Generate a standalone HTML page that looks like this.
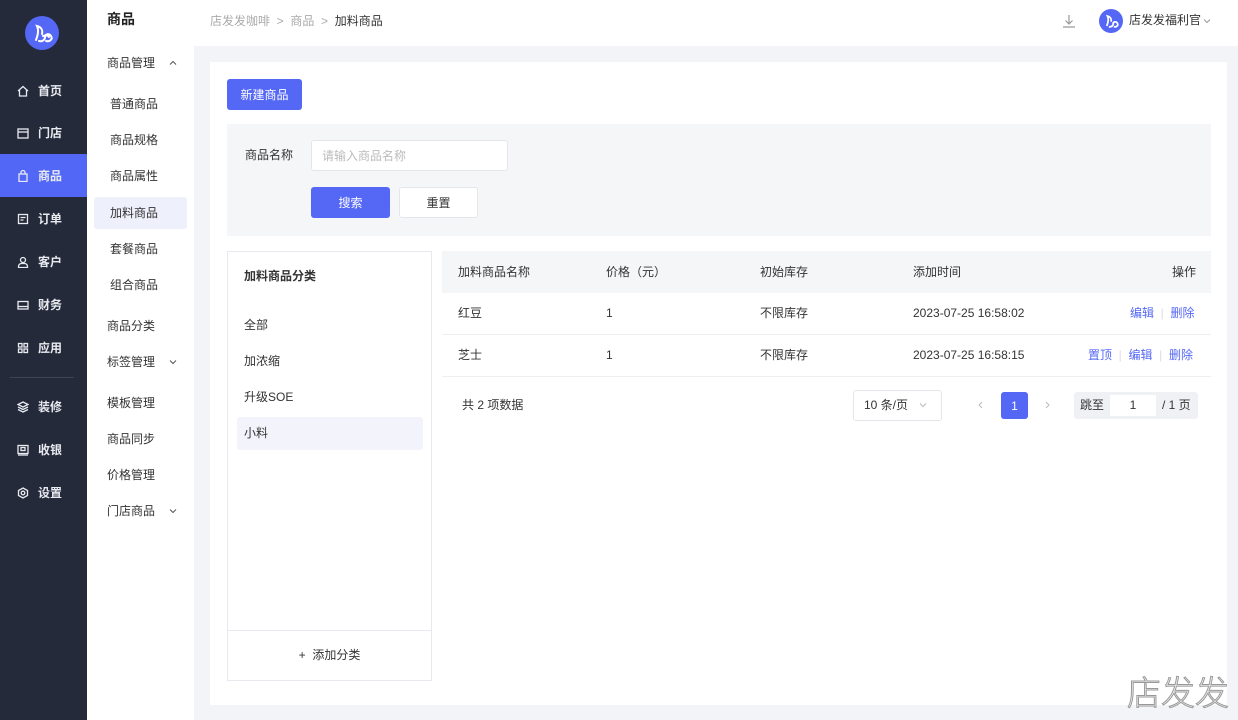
<!DOCTYPE html>
<html><head><meta charset="utf-8">
<style>
*{margin:0;padding:0;box-sizing:border-box}
body{width:1238px;height:720px;overflow:hidden;position:relative;background:#f3f4f8;font-family:"Liberation Sans","Noto Sans CJK SC",sans-serif;font-size:12px;line-height:16px;color:#333}
.abs{position:absolute}
#nav{left:0;top:0;width:87px;height:720px;background:#242a3a}
.logo{left:25px;top:16px;width:34px;height:34px;border-radius:50%;background:#5567f5}
.ni{position:absolute;left:0;width:87px;height:43px;color:#e8eaf0;font-size:12px;font-weight:bold;display:flex;align-items:center;padding-left:17px}
.ni svg{width:12px;height:12px;margin-right:9px;fill:none;stroke:#e8eaf0;stroke-width:1.3}
.ni.on{background:#5267f6}
#sub{left:87px;top:0;width:107px;height:720px;background:#fff}
.si{position:absolute;left:20px;font-size:12px;color:#333}
.si2{position:absolute;left:23px;font-size:12px;color:#333}
.chev{position:absolute;left:81px;width:10px;height:10px}
#top{left:194px;top:0;width:1044px;height:46px;background:#fff}
#card{left:210px;top:62px;width:1017px;height:643px;background:#fff}
.btn{position:absolute;border-radius:3px;display:flex;align-items:center;justify-content:center;font-size:12px}
.pri{background:#5467f5;color:#fff}
.link{color:#5467f5}
</style></head><body>
<div id="nav" class="abs">
  <div class="abs logo"><svg width="34" height="34" viewBox="0 0 34 34"><path d="M11 24c2-5 3-10 1-14 4 1 6 4 5 8M14 25c3 1 6-1 6-4s4-4 6-1-1 6-5 5M18 20c2-1 5-1 6 1" stroke="#fff" stroke-width="2" fill="none" stroke-linecap="round"/></svg></div>
  <div class="ni" style="top:69px"><svg viewBox="0 0 12 12"><path d="M1 6L6 1.5 11 6M2.5 5v6h7V5"/></svg>首页</div>
  <div class="ni" style="top:111px"><svg viewBox="0 0 12 12"><rect x="1" y="2" width="10" height="9"/><path d="M1 5h10"/></svg>门店</div>
  <div class="ni on" style="top:154px"><svg viewBox="0 0 12 12"><rect x="2" y="4" width="8" height="7.5"/><path d="M4 4V2.5a2 2 0 014 0V4"/></svg>商品</div>
  <div class="ni" style="top:197px"><svg viewBox="0 0 12 12"><rect x="1.5" y="1.5" width="9" height="9"/><path d="M3.5 4.5h5M3.5 7h3"/></svg>订单</div>
  <div class="ni" style="top:240px"><svg viewBox="0 0 12 12"><circle cx="6" cy="4" r="2.5"/><path d="M1.5 11.5v-1a3 3 0 013-3h3a3 3 0 013 3v1z"/></svg>客户</div>
  <div class="ni" style="top:283px"><svg viewBox="0 0 12 12"><rect x="1" y="2.5" width="10" height="7.5"/><path d="M1 7.5h10"/></svg>财务</div>
  <div class="ni" style="top:326px"><svg viewBox="0 0 12 12"><rect x="1.5" y="1.5" width="3.5" height="3.5"/><rect x="7" y="1.5" width="3.5" height="3.5"/><rect x="1.5" y="7" width="3.5" height="3.5"/><rect x="7" y="7" width="3.5" height="3.5"/></svg>应用</div>
  <div class="abs" style="left:10px;top:377px;width:64px;height:1px;background:#3e4456"></div>
  <div class="ni" style="top:385px"><svg viewBox="0 0 12 12"><path d="M6 1l5 2.5-5 2.5-5-2.5zM1 6l5 2.5L11 6M1 8.5l5 2.5 5-2.5"/></svg>装修</div>
  <div class="ni" style="top:428px"><svg viewBox="0 0 12 12"><rect x="1" y="1.5" width="10" height="8"/><rect x="4" y="3.5" width="4" height="3"/><path d="M1 11h10"/></svg>收银</div>
  <div class="ni" style="top:471px"><svg viewBox="0 0 12 12"><path d="M6 1l4.5 2.5v5L6 11 1.5 8.5v-5z"/><circle cx="6" cy="6" r="1.8"/></svg>设置</div>
</div>
<div id="sub" class="abs">
  <div class="abs" style="left:20px;top:11px;font-size:14px;font-weight:bold;color:#222">商品</div>
  <div class="si" style="top:55px">商品管理</div><svg class="chev" style="top:58px" viewBox="0 0 10 10"><path d="M2 6.5L5 3.5 8 6.5" stroke="#555" fill="none" stroke-width="1"/></svg>
  <div class="si2" style="top:96px">普通商品</div>
  <div class="si2" style="top:132px">商品规格</div>
  <div class="si2" style="top:168px">商品属性</div>
  <div class="abs" style="left:7px;top:197px;width:93px;height:32px;background:#eef0fb;border-radius:3px"></div>
  <div class="si2" style="top:205px">加料商品</div>
  <div class="si2" style="top:241px">套餐商品</div>
  <div class="si2" style="top:277px">组合商品</div>
  <div class="si" style="top:318px">商品分类</div>
  <div class="si" style="top:354px">标签管理</div><svg class="chev" style="top:357px" viewBox="0 0 10 10"><path d="M2 3.5L5 6.5 8 3.5" stroke="#555" fill="none" stroke-width="1"/></svg>
  <div class="si" style="top:395px">模板管理</div>
  <div class="si" style="top:431px">商品同步</div>
  <div class="si" style="top:467px">价格管理</div>
  <div class="si" style="top:503px">门店商品</div><svg class="chev" style="top:506px" viewBox="0 0 10 10"><path d="M2 3.5L5 6.5 8 3.5" stroke="#555" fill="none" stroke-width="1"/></svg>
</div>
<div id="top" class="abs">
  <div class="abs" style="left:16px;top:13px;color:#aaa">店发发咖啡 &nbsp;&gt;&nbsp; 商品 &nbsp;&gt;&nbsp; <span style="color:#333">加料商品</span></div>
  <svg class="abs" style="left:867px;top:13px" width="16" height="16" viewBox="0 0 16 16" fill="none" stroke="#999" stroke-width="1.2"><path d="M8 2v9M4.5 7.5L8 11l3.5-3.5M2 14h12"/></svg>
  <div class="abs" style="left:905px;top:9px;width:24px;height:24px;border-radius:50%;background:#5567f5"><svg width="24" height="24" viewBox="0 0 34 34"><path d="M11 24c2-5 3-10 1-14 4 1 6 4 5 8M14 25c3 1 6-1 6-4s4-4 6-1-1 6-5 5" stroke="#fff" stroke-width="2.5" fill="none"/></svg></div>
  <div class="abs" style="left:935px;top:12px;color:#333">店发发福利官</div>
  <svg class="abs" style="left:1008px;top:16px" width="10" height="10" viewBox="0 0 10 10"><path d="M2 3.5L5 6.5 8 3.5" stroke="#999" fill="none" stroke-width="1"/></svg>
</div>
<div id="card" class="abs">
  <div class="btn pri" style="left:17px;top:17px;width:75px;height:31px">新建商品</div>
  <div class="abs" style="left:17px;top:62px;width:984px;height:112px;background:#f5f6f8">
    <div class="abs" style="left:18px;top:23px">商品名称</div>
    <div class="abs" style="left:84px;top:16px;width:197px;height:31px;background:#fff;border:1px solid #e4e6eb;border-radius:3px;color:#bbb;padding:7px 10px">请输入商品名称</div>
    <div class="btn pri" style="left:84px;top:63px;width:79px;height:31px">搜索</div>
    <div class="btn" style="left:172px;top:63px;width:79px;height:31px;background:#fff;border:1px solid #e4e6eb">重置</div>
  </div>
  <div class="abs" style="left:17px;top:189px;width:205px;height:430px;border:1px solid #e8e9ee">
    <div class="abs" style="left:16px;top:16px;font-weight:bold">加料商品分类</div>
    <div class="abs" style="left:16px;top:65px">全部</div>
    <div class="abs" style="left:16px;top:101px">加浓缩</div>
    <div class="abs" style="left:16px;top:137px">升级SOE</div>
    <div class="abs" style="left:9px;top:165px;width:186px;height:33px;background:#f3f4fb;border-radius:3px"></div>
    <div class="abs" style="left:16px;top:173px">小料</div>
    <div class="abs" style="left:0;top:378px;width:203px;height:1px;background:#e8e9ee"></div>
    <div class="abs" style="left:0;top:395px;width:203px;text-align:center">+ &nbsp;添加分类</div>
  </div>
  <div class="abs" style="left:232px;top:189px;width:769px;height:42px;background:#f5f6f8"></div>
  <div class="abs" style="left:248px;top:202px">加料商品名称</div>
  <div class="abs" style="left:396px;top:202px">价格（元）</div>
  <div class="abs" style="left:550px;top:202px">初始库存</div>
  <div class="abs" style="left:703px;top:202px">添加时间</div>
  <div class="abs" style="left:962px;top:202px">操作</div>
  <div class="abs" style="left:248px;top:243px">红豆</div>
  <div class="abs" style="left:396px;top:243px">1</div>
  <div class="abs" style="left:550px;top:243px">不限库存</div>
  <div class="abs" style="left:703px;top:243px">2023-07-25 16:58:02</div>
  <div class="abs link" style="left:920px;top:243px">编辑 <span style="color:#ddd">&nbsp;|&nbsp;</span> 删除</div>
  <div class="abs" style="left:232px;top:272px;width:769px;height:1px;background:#eceef2"></div>
  <div class="abs" style="left:248px;top:285px">芝士</div>
  <div class="abs" style="left:396px;top:285px">1</div>
  <div class="abs" style="left:550px;top:285px">不限库存</div>
  <div class="abs" style="left:703px;top:285px">2023-07-25 16:58:15</div>
  <div class="abs link" style="left:878px;top:285px">置顶 <span style="color:#ddd">&nbsp;|&nbsp;</span> 编辑 <span style="color:#ddd">&nbsp;|&nbsp;</span> 删除</div>
  <div class="abs" style="left:232px;top:314px;width:769px;height:1px;background:#eceef2"></div>
  <div class="abs" style="left:252px;top:335px">共 2 项数据</div>
  <div class="abs" style="left:643px;top:328px;width:89px;height:31px;border:1px solid #e4e6eb;border-radius:3px;padding:6px 10px">10 条/页</div>
  <svg class="abs" style="left:708px;top:338px" width="10" height="10" viewBox="0 0 10 10"><path d="M2 3.5L5 6.5 8 3.5" stroke="#bbb" fill="none" stroke-width="1"/></svg>
  <svg class="abs" style="left:766px;top:338px" width="10" height="10" viewBox="0 0 10 10"><path d="M6 2L3 5 6 8" stroke="#bbb" fill="none" stroke-width="1"/></svg>
  <div class="btn pri" style="left:791px;top:330px;width:27px;height:27px">1</div>
  <svg class="abs" style="left:832px;top:338px" width="10" height="10" viewBox="0 0 10 10"><path d="M4 2L7 5 4 8" stroke="#bbb" fill="none" stroke-width="1"/></svg>
  <div class="abs" style="left:864px;top:330px;width:124px;height:27px;background:#f0f1f4;border-radius:3px">
    <div class="abs" style="left:6px;top:5px">跳至</div>
    <div class="abs" style="left:36px;top:3px;width:46px;height:21px;background:#fff;text-align:center;padding-top:2px">1</div>
    <div class="abs" style="left:88px;top:5px">/ 1 页</div>
  </div>
</div>
<div class="abs" style="left:1127px;top:674px;font-size:34px;color:#f4f4f4;-webkit-text-stroke:1px #999;font-family:'Noto Sans CJK SC',sans-serif;font-weight:300;line-height:1">店发发</div>
</body></html>
